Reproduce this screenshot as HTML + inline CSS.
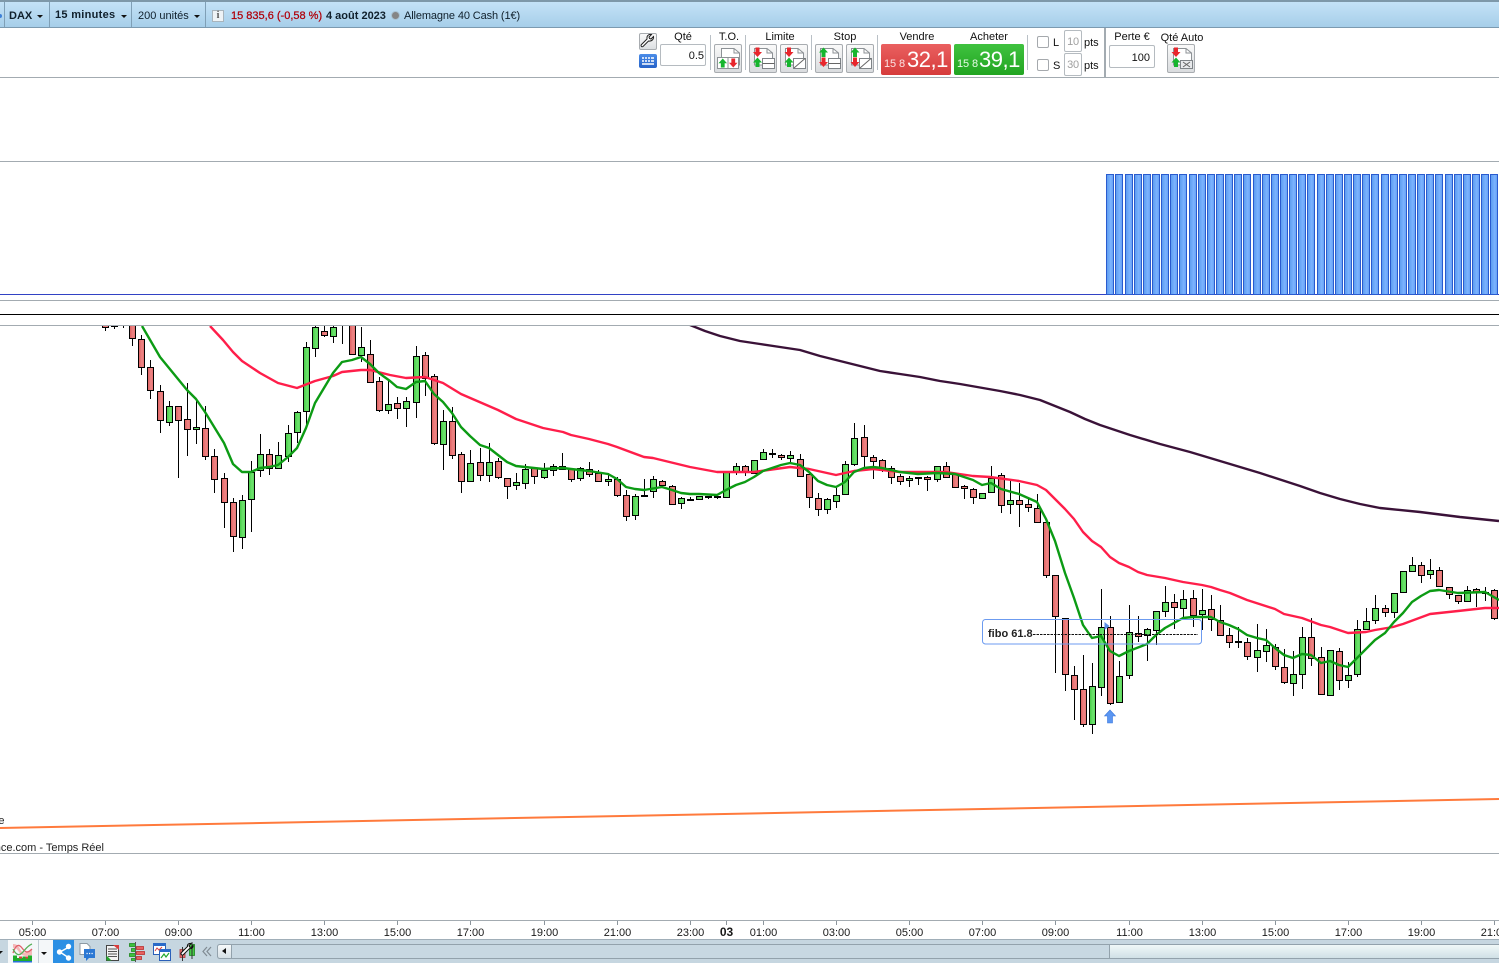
<!DOCTYPE html>
<html lang="fr">
<head>
<meta charset="utf-8">
<title>DAX 15 minutes</title>
<style>
html,body{margin:0;padding:0;background:#fff;}
body{width:1499px;height:963px;overflow:hidden;position:relative;font-family:"Liberation Sans",sans-serif;font-size:11px;color:#111;}
.a{position:absolute;white-space:nowrap;}
.t{position:absolute;white-space:nowrap;line-height:13px;}
.c{transform:translateX(-50%);}
#top{position:absolute;left:0;top:0;width:1499px;height:27px;background:linear-gradient(#c4e2f7,#a6cee9);border-top:2px solid #7e98a9;box-sizing:border-box;border-bottom:0;}
.sep{position:absolute;top:2px;height:25px;width:1px;background:#7f9fb6;}
.hl{position:absolute;left:0;width:1499px;height:1px;}
.vs{position:absolute;width:1px;top:35px;height:35px;background:#b9c0c6;}
.btn{position:absolute;top:44px;width:26px;height:27px;border:1px solid #a8acb0;border-radius:2px;background:linear-gradient(#fafafa,#d9dcdf);}
.btn svg{position:absolute;left:0;top:0;}
.inp{position:absolute;border:1px solid #b5bbc0;border-radius:2px;background:#fff;text-align:right;box-sizing:border-box;padding-right:1px;}
.cb{position:absolute;width:10px;height:10px;border:1px solid #a5a9ad;border-radius:2px;background:#fff;}
.caret{position:absolute;width:0;height:0;border-left:3.5px solid transparent;border-right:3.5px solid transparent;border-top:3.5px solid #111;}
.px{position:absolute;top:44px;width:70px;height:31px;border-radius:2px;color:#fff;}
</style>
</head>
<body>

<svg width="0" height="0" style="position:absolute">
<defs>
<linearGradient id="gg" x1="0" x2="1" y1="0" y2="0"><stop offset="0" stop-color="#42c942"/><stop offset=".6" stop-color="#6fe36f"/><stop offset="1" stop-color="#55d555"/></linearGradient>
<linearGradient id="gr" x1="0" x2="1" y1="0" y2="0"><stop offset="0" stop-color="#dc5f5f"/><stop offset=".6" stop-color="#ee8585"/><stop offset="1" stop-color="#e06c6c"/></linearGradient>
<linearGradient id="gb" x1="0" x2="1" y1="0" y2="0"><stop offset="0" stop-color="#5a9bee"/><stop offset=".6" stop-color="#7cb3ff"/><stop offset="1" stop-color="#639ff2"/></linearGradient>
<symbol id="dn" viewBox="0 0 10 10" overflow="visible"><path d="M3 0h4v4.500h2.500L5 9.500.5 4.500H3z" fill="#e8262c"/></symbol>
<symbol id="up" viewBox="0 0 10 10" overflow="visible"><path d="M5 0l4.500 5H7v4.500H3V5H.5z" fill="#16b52e"/></symbol>
<symbol id="doc" viewBox="0 0 20 14" overflow="visible"><path d="M.5.500H13L18.500 5v12H.5z" fill="#fff" stroke="#8d9296"/><path d="M13 .5V5h5.500" fill="none" stroke="#8d9296"/></symbol>
</defs>
</svg>

<!-- top bar -->
<div id="top"></div>
<div class="hl" style="top:27px;background:#7c9ab0"></div>
<div class="a" style="left:-2px;top:14px;width:4px;height:4px;border-radius:3px;background:#3d80d8"></div>
<div class="sep" style="left:4px"></div>
<div class="sep" style="left:49px"></div>
<div class="sep" style="left:131px"></div>
<div class="sep" style="left:205px"></div>
<div class="t" style="left:9px;top:10px;font-weight:bold;color:#10202c">DAX</div>
<div class="caret" style="left:37px;top:15px"></div>
<div class="t" style="left:55px;top:9px;font-weight:bold;color:#10202c;letter-spacing:.3px">15 minutes</div>
<div class="caret" style="left:121px;top:15px"></div>
<div class="t" style="left:138px;top:10px;color:#10202c">200 unités</div>
<div class="caret" style="left:194px;top:15px"></div>
<div class="a" style="left:212px;top:10px;width:12px;height:12px;background:#eef3f6;border:1px solid #a8b4bc;box-sizing:border-box;text-align:center;font:bold 10px/10px 'Liberation Serif',serif;color:#555">i</div>
<div class="t" style="left:231px;top:10px;color:#b0000a;-webkit-text-stroke:.25px #b0000a">15 835,6 (-0,58 %)</div>
<div class="t" style="left:326px;top:10px;font-weight:bold;color:#10202c">4 août 2023</div>
<div class="a" style="left:391px;top:11px;width:9px;height:9px;border-radius:50%;background:#858585;border:1px solid #a9c2d2;box-sizing:border-box"></div>
<div class="t" style="left:404px;top:10px;color:#10202c;letter-spacing:-.12px">Allemagne 40 Cash (1€)</div>

<!-- toolbar -->
<div class="hl" style="top:77px;background:#a3abb1"></div>
<div class="a" style="left:639px;top:33px;width:18px;height:17px;border:1px solid #a8acb0;border-radius:2px;box-sizing:border-box;background:linear-gradient(#fafafa,#dcdfe2)">
<svg width="16" height="15" style="position:absolute;left:0;top:0"><path d="M13.500 2.500l-2.500 2.500-1.500-.5-.5-1.500 2.500-2.500c-2-.5-4 .5-4.500 2.500l0 2-5.500 5.500c-1 1 0 3 1.500 2l5.500-5.500c3 .5 5.500-1.500 5-4.500z" fill="#fff" stroke="#222" stroke-width="1"/></svg>
</div>
<div class="a" style="left:639px;top:54px;width:18px;height:14px;border-radius:2px;background:linear-gradient(#4b8ce8,#2662c8)">
<svg width="18" height="14" style="position:absolute;left:0;top:0"><path d="M3 4h2M6 4h2M9 4h2M12 4h3M3 7h2M6 7h2M9 7h2M12 7h3M3 10h12" stroke="#fff" stroke-width="1.500" fill="none"/></svg>
</div>
<div class="t c" style="left:683px;top:31px">Qté</div>
<div class="inp" style="left:660px;top:44px;width:46px;height:22px;line-height:23px">0.5</div>
<div class="vs" style="left:710px"></div>
<div class="t c" style="left:729px;top:31px">T.O.</div>
<div class="btn" style="left:714px"><svg width="26" height="27"><use href="#doc" x="6" y="3" width="20" height="14"/><rect x="2.500" y="12.500" width="21" height="11" fill="#fff" stroke="#8d9296"/><path d="M13 13v10" stroke="#8d9296"/><use href="#up" x="3" y="13.500" width="9.500" height="9.500"/><use href="#dn" x="13.500" y="13.500" width="9.500" height="9.500"/></svg></div>
<div class="vs" style="left:745px"></div>
<div class="t c" style="left:780px;top:31px">Limite</div>
<div class="btn" style="left:749px"><svg width="26" height="27"><use href="#doc" x="4" y="3" width="20" height="14"/><use href="#dn" x="2.500" y="2.500" width="10" height="10"/><use href="#up" x="2.500" y="12.500" width="10" height="10"/><rect x="12.500" y="13.500" width="12" height="10" fill="#fff" stroke="#7f8488"/><path d="M12.500 18.500h12" stroke="#666"/></svg></div>
<div class="btn" style="left:780px"><svg width="26" height="27"><use href="#doc" x="4" y="3" width="20" height="14"/><use href="#dn" x="3" y="2.500" width="10" height="10"/><use href="#up" x="3" y="12.500" width="10" height="10"/><rect x="12.500" y="13.500" width="12" height="10" fill="#fff" stroke="#7f8488"/><path d="M13 23l11-9.500" stroke="#666"/></svg></div>
<div class="vs" style="left:811px"></div>
<div class="t c" style="left:845px;top:31px">Stop</div>
<div class="btn" style="left:815px"><svg width="26" height="27"><use href="#doc" x="4" y="3" width="20" height="14"/><use href="#up" x="2.500" y="2.500" width="10" height="10"/><use href="#dn" x="2.500" y="12.500" width="10" height="10"/><rect x="12.500" y="13.500" width="12" height="10" fill="#fff" stroke="#7f8488"/><path d="M12.500 18.500h12" stroke="#666"/></svg></div>
<div class="btn" style="left:846px"><svg width="26" height="27"><use href="#doc" x="4" y="3" width="20" height="14"/><use href="#up" x="3" y="2.500" width="10" height="10"/><use href="#dn" x="3" y="12.500" width="10" height="10"/><rect x="12.500" y="13.500" width="12" height="10" fill="#fff" stroke="#7f8488"/><path d="M13 23l11-9.500" stroke="#666"/></svg></div>
<div class="vs" style="left:877px"></div>
<div class="t c" style="left:917px;top:31px">Vendre</div>
<div class="px" style="left:881px;background:linear-gradient(#ea6060,#d63c3c)"><span class="t" style="left:3px;top:14px;color:#fbe3e3;letter-spacing:-.1px">15 8</span><span class="t" style="left:26px;top:3px;font-size:22px;line-height:26px;letter-spacing:-.5px">32,1</span></div>
<div class="t c" style="left:989px;top:31px">Acheter</div>
<div class="px" style="left:954px;background:linear-gradient(#3fc23f,#22a522)"><span class="t" style="left:3px;top:14px;color:#e8fbe8;letter-spacing:-.1px">15 8</span><span class="t" style="left:25px;top:3px;font-size:22px;line-height:26px;letter-spacing:-.5px">39,1</span></div>
<div class="vs" style="left:1027px"></div>
<div class="cb" style="left:1037px;top:36px"></div>
<div class="t" style="left:1053px;top:37px">L</div>
<div class="inp" style="left:1064px;top:30px;width:18px;height:22px;line-height:22px;text-align:center;color:#a0a0a0;padding:0;font-size:11px;letter-spacing:-.3px">10</div>
<div class="t" style="left:1084px;top:37px">pts</div>
<div class="cb" style="left:1037px;top:59px"></div>
<div class="t" style="left:1053px;top:60px">S</div>
<div class="inp" style="left:1064px;top:53px;width:18px;height:23px;line-height:23px;text-align:center;color:#a0a0a0;padding:0;font-size:11px;letter-spacing:-.3px">30</div>
<div class="t" style="left:1084px;top:60px">pts</div>
<div class="a" style="left:1104px;top:28px;width:2px;height:49px;background:#a3abb1"></div>
<div class="t c" style="left:1132px;top:31px">Perte €</div>
<div class="inp" style="left:1109px;top:45px;width:46px;height:23px;line-height:24px;padding-right:4px">100</div>
<div class="t c" style="left:1182px;top:32px">Qté Auto</div>
<div class="btn" style="left:1167px"><svg width="26" height="27"><use href="#doc" x="5" y="3" width="20" height="14"/><use href="#dn" x="3" y="2.500" width="10" height="10"/><use href="#up" x="3" y="12.500" width="10" height="10"/><rect x="12.500" y="15.500" width="12" height="8" fill="#e8eaec" stroke="#7f8488"/><path d="M15 17l7 5M22 17l-7 5" stroke="#666"/></svg></div>

<!-- panel lines -->
<div class="hl" style="top:161px;background:#a3abb1"></div>
<div class="hl" style="top:300px;background:#a3abb1"></div>
<div class="hl" style="top:314px;background:#000"></div>
<div class="hl" style="top:325px;background:#a3abb1"></div>
<div class="hl" style="top:853px;background:#a3abb1"></div>
<div class="hl" style="top:920px;background:#a3abb1"></div>

<!-- histogram + chart -->
<svg id="hist" class="a" style="left:0;top:160px" width="1499" height="140" viewBox="0 160 1499 140">
<path d="M0 294.500H1499" stroke="#3242c4" stroke-width="1"/>
</svg>

<svg id="chart" class="a" style="left:0;top:326px" width="1499" height="527" viewBox="0 326 1499 527">
<g id="candles"></g>
<polyline fill="none" stroke="#3a1238" stroke-width="2.400" stroke-linejoin="round" points="690,325 705,331 720,336 740,341 760,344 780,347 800,350 820,356 840,361 860,366 880,371 900,374 920,377 940,381 960,384 1000,391 1020,395 1040,400 1055,406 1070,412 1085,419 1100,425 1115,430 1130,435 1160,444 1190,452 1220,461 1260,473 1300,486 1320,493 1340,499 1360,504 1380,508 1420,512 1460,517 1499,521"/>
<polyline fill="none" stroke="#ff1e4a" stroke-width="2.400" stroke-linejoin="round" points="210,326 223,340 233,352 242,361 260,373 278,383 297,388 315,381 333,376 342,372 361,370 370,370 390,375 406,378 425,377 443,383 461,394 498,410 516,419 543,428 563,432 571,435 589,439 608,444 617,447 644,457 653,458 690,467 717,472 736,472 754,472 790,467 809,469 836,475 854,471 873,469 900,472 946,472 973,476 990,477 1019,481 1037,485 1046,490 1055,499 1065,509 1074,519 1083,532 1092,541 1101,547 1110,557 1119,563 1129,567 1138,572 1147,575 1165,578 1183,582 1202,585 1211,587 1220,590 1230,593 1247,600 1275,609 1284,614 1302,618 1321,625 1330,627 1348,633 1366,632 1375,630 1393,627 1403,624 1430,614 1458,611 1485,608 1499,608"/>
<polyline fill="none" stroke="#0c9b14" stroke-width="2.400" stroke-linejoin="round" points="142,326 160,357 187,390 196,399 205,412 224,443 233,464 242,472 251,472 260,468 269,467 278,465 288,457 297,448 306,428 315,403 324,388 333,373 342,362 352,360 361,357 370,364 379,373 390,381 397,387 406,389 416,382 425,381 434,394 443,402 452,413 461,427 470,436 480,445 489,448 498,455 507,462 516,466 525,467 543,469 563,468 571,469 589,471 608,474 617,479 626,487 635,489 644,490 662,487 672,490 681,493 690,494 699,494 717,495 726,490 736,485 745,482 754,477 763,471 772,468 781,465 790,463 800,465 809,472 818,481 827,485 836,487 845,482 854,472 864,468 873,467 882,468 900,472 918,474 937,473 955,474 973,480 982,485 991,483 1001,489 1019,494 1037,502 1046,519 1055,541 1065,573 1074,598 1083,625 1092,638 1101,636 1110,651 1119,656 1129,651 1147,644 1156,635 1165,628 1183,618 1193,617 1211,617 1220,622 1229,625 1238,629 1247,635 1257,638 1266,640 1275,648 1284,655 1293,658 1302,654 1311,655 1321,663 1330,661 1339,665 1348,667 1357,658 1366,649 1375,640 1385,633 1394,622 1403,613 1412,602 1421,596 1430,591 1439,590 1458,593 1485,592 1499,600"/>
<polyline fill="none" stroke="#ff7a3c" stroke-width="2" points="0,828 1499,799"/>
<rect x="982.500" y="619.500" width="219" height="24.500" rx="3" fill="none" stroke="#6c9bf0" stroke-width="1"/>
<path d="M1033 634.500H1198" stroke="#111" stroke-width="1" stroke-dasharray="2.500 1"/>
<text x="988" y="637" font-family="Liberation Sans" font-size="11" font-weight="bold" fill="#222">fibo 61.8</text>
<path d="M1104.500 622l5 4-5 4z" fill="#5b8fe8"/>
<path d="M1110 710l5.500 6h-3v7h-5v-7h-3z" fill="#5b96f2" stroke="#3b78dc" stroke-width=".6"/>
<text x="4.500" y="824" text-anchor="end" font-family="Liberation Sans" font-size="11" fill="#222">Volume</text>
<text x="104" y="851" text-anchor="end" font-family="Liberation Sans" font-size="11" fill="#222">ance.com - Temps Réel</text>
</svg>

<!-- x axis -->
<svg class="a" style="left:0;top:920px" width="1499" height="19" viewBox="0 920 1499 19">
<path d="M32.500 921v4M105.500 921v4M178.500 921v4M251.500 921v4M324.500 921v4M397.500 921v4M470.500 921v4M544.500 921v4M617.500 921v4M690.500 921v4M726.500 921v4M763.500 921v4M836.500 921v4M909.500 921v4M982.500 921v4M1055.500 921v4M1129.500 921v4M1202.500 921v4M1275.500 921v4M1348.500 921v4M1421.500 921v4M1494.500 921v4" stroke="#8c959c"/>
<g font-family="Liberation Sans" font-size="11" fill="#1a1a1a" text-anchor="middle">
<text x="32.500" y="936">05:00</text><text x="105.500" y="936">07:00</text><text x="178.500" y="936">09:00</text><text x="251.500" y="936">11:00</text><text x="324.500" y="936">13:00</text><text x="397.500" y="936">15:00</text><text x="470.500" y="936">17:00</text><text x="544.500" y="936">19:00</text><text x="617.500" y="936">21:00</text><text x="690.500" y="936">23:00</text><text x="726.500" y="936" font-weight="bold" font-size="12">03</text><text x="763.500" y="936">01:00</text><text x="836.500" y="936">03:00</text><text x="909.500" y="936">05:00</text><text x="982.500" y="936">07:00</text><text x="1055.500" y="936">09:00</text><text x="1129.500" y="936">11:00</text><text x="1202.500" y="936">13:00</text><text x="1275.500" y="936">15:00</text><text x="1348.500" y="936">17:00</text><text x="1421.500" y="936">19:00</text><text x="1494.500" y="936">21:00</text>
</g>
</svg>

<!-- bottom bar -->
<div class="a" style="left:0;top:939px;width:1499px;height:24px;background:#c6d6e0;border-top:1px solid #a0aeb8;box-sizing:border-box"></div>
<div class="caret" style="left:-3px;top:951px"></div>
<div class="a" style="left:8px;top:940px;width:30px;height:23px;background:#f4f7f9"></div>
<div class="a" style="left:38px;top:940px;width:15px;height:23px;background:#f4f7f9;border-left:1px solid #c0ccd4;box-sizing:border-box"></div>
<div class="caret" style="left:41px;top:952px"></div>
<div class="a" style="left:53px;top:940px;width:21px;height:23px;background:#2b8fe4"></div>
<svg class="a" style="left:0;top:939px" width="232" height="24" viewBox="0 939 232 24">
<!-- chart selector -->
<path d="M13 944c3 0 5 1 7 5s5 5 12 1v5c-7 2-10 1-13-3s-4-5-6-4z" fill="#f4b8b8"/>
<path d="M13 953c3-9 6-9 9-5s5 6 10 1" fill="none" stroke="#e0606a" stroke-width="1.300"/>
<path d="M13 949c3 6 6 7 9 4s5-7 10-9" fill="none" stroke="#58b058" stroke-width="1.300"/>
<path d="M13 958h19v3H13zM13 955.500h4v3h-4zM28 955.500h4v3h-4zM22.500 956.500h3v2h-3z" fill="#1fae2a"/>
<path d="M19 956.500h3v2h-3zM25.500 956.500h2.500v2h-2.500z" fill="#d94040"/>
<path d="M13 961h19v1.500H13z" fill="#2a70d8"/>
<!-- share -->
<path d="M60 952l9-5M60 952l9 6" stroke="#fff" stroke-width="1.400"/>
<circle cx="59.500" cy="952" r="2.700" fill="#fff"/><circle cx="68.500" cy="946.500" r="2.700" fill="#fff"/><circle cx="68.500" cy="958" r="2.700" fill="#fff"/>
<!-- doc + chat -->
<path d="M80 943.500h7l3 3v8h-10z" fill="#fff" stroke="#8d9aa4"/>
<path d="M84 949h11v9h-6l-3 3v-3h-2z" fill="#2b78d4"/>
<path d="M86.500 953.500h1.200M89 953.500h1.200M91.500 953.500h1.200" stroke="#fff" stroke-width="1.200"/>
<!-- order list -->
<path d="M106.500 945.500h12v15h-12z" fill="#f4f4f4" stroke="#444"/>
<path d="M108 949h9M108 951.500h9M108 954h9M108 956.500h9" stroke="#555"/>
<path d="M113 945h6v5z" fill="#d93b3b"/><path d="M106.500 960.500v-5l5 5z" fill="#24a82c"/>
<!-- depth bars -->
<path d="M129.500 943.500h6v3h-6zM131.500 948.500h4v3h-4zM129.500 953.500h6v3h-6zM131.500 958.500h4v2h-4z" fill="#3cc23c" stroke="#1c861c" stroke-width=".8"/>
<path d="M136.500 946.500h7v3h-7zM136.500 951.500h8v3h-8zM136.500 956.500h5v3h-5z" fill="#e76060" stroke="#b82c2c" stroke-width=".8"/>
<path d="M135.500 942v20" stroke="#555"/>
<!-- windows -->
<rect x="153.500" y="943.500" width="12" height="11" fill="#fff" stroke="#2a5fb8"/><path d="M153 943h13v3h-13z" fill="#2a6ac8"/>
<rect x="159.500" y="949.500" width="11" height="11" fill="#fff" stroke="#2a5fb8"/><path d="M159 949h12v3h-12z" fill="#2a6ac8"/>
<path d="M155 951l2-3 2 2 3-3" stroke="#d84040" fill="none"/><path d="M161 958l3-4 2 3 3-4" stroke="#24a82c" fill="none" stroke-width="1.200"/>
<!-- indicators -->
<path d="M180 949.500h5v8h-5z" fill="#e57070" stroke="#a33" stroke-width=".8"/><path d="M189.500 944.500h5v11h-5z" fill="#45c845" stroke="#1c861c" stroke-width=".8"/><path d="M192 942v17M182.500 947v14" stroke="#333"/>
<path d="M193 945.500l-2 2-1.500-.5-.5-1.500 2-2c-2-.5-4 1-3.500 3l-6 6c-1.500 1.500.5 3.500 2 2l6-6c2 .5 4-1 3.500-3z" fill="#fff" stroke="#111" stroke-width="1"/>
<!-- << -->
<path d="M207 947l-4 4.500 4 4.500M211 947l-4 4.500 4 4.500" fill="none" stroke="#7f8a92" stroke-width="1.200"/>
</svg>
<div class="a" style="left:217px;top:944px;width:1282px;height:15px;background:#c8d8e2;border:1px solid #93a2ac;border-right:0;box-sizing:border-box;border-radius:3px 0 0 3px"></div>
<div class="a" style="left:217px;top:944px;width:15px;height:15px;background:linear-gradient(#f6f9fa,#d5e0e6);border:1px solid #93a2ac;box-sizing:border-box;border-radius:3px 0 0 3px"></div>
<div class="a" style="left:222px;top:948px;width:0;height:0;border-top:3.500px solid transparent;border-bottom:3.500px solid transparent;border-right:4px solid #111"></div>
<div class="a" style="left:1109px;top:944px;width:390px;height:15px;background:linear-gradient(#f0f8f8,#d0e0e6);border:1px solid #93a2ac;border-right:0;box-sizing:border-box"></div>

<script>
var D=[
[320,323,327,331,'r'],[320,324,326,329,'g'],[320,322,324,328,'r'],[320,320,338,346,'r'],[335,339,367,375,'r'],[360,367,390,399,'r'],[385,391,420,433,'r'],[401,406,422,426,'g'],[406,406,420,478,'r'],[383,419,429,456,'r'],[400,427,429,444,'g'],[406,428,456,460,'r'],[449,456,479,493,'r'],[473,478,502,528,'r'],[498,502,536,552,'r'],[495,500,537,549,'g'],[461,472,499,532,'g'],[434,454,470,477,'g'],[449,454,468,475,'r'],[442,455,468,468,'g'],[425,433,456,462,'g'],[411,412,432,443,'g'],[342,347,411,426,'g'],[320,327,348,357,'g'],[322,331,335,337,'r'],[322,327,336,343,'g'],[322,324,326,344,'d'],[320,320,354,354,'r'],[327,347,355,362,'g'],[340,354,382,382,'r'],[377,381,410,412,'r'],[381,404,410,414,'g'],
[397,403,408,419,'r'],[397,401,408,427,'g'],[346,356,402,418,'g'],[352,355,378,396,'r'],[374,376,443,445,'r'],[410,421,444,470,'g'],[407,421,455,459,'r'],[452,454,481,493,'r'],[450,463,481,481,'g'],[448,462,475,481,'r'],[443,462,475,482,'g'],[458,461,477,479,'r'],[478,478,486,499,'r'],[473,482,485,490,'g'],[464,469,483,489,'g'],[467,468,476,484,'r'],[463,470,477,479,'g'],[464,466,470,476,'g'],[453,466,469,470,'r'],[468,469,479,482,'r'],[467,468,478,481,'g'],[462,469,474,477,'r'],[470,473,481,482,'r'],[473,479,481,486,'g'],[477,479,495,497,'r'],[490,495,516,521,'r'],[494,496,515,520,'g'],[479,495,495,496,'d'],[476,479,491,498,'g'],[480,481,485,486,'r'],[485,486,504,504,'r'],[497,498,503,509,'g'],
[497,499,499,501,'d'],[496,496,499,500,'g'],[496,496,496,499,'d'],[496,496,496,499,'d'],[472,472,497,498,'g'],[463,466,472,475,'g'],[465,466,472,476,'r'],[460,460,473,474,'g'],[449,452,459,459,'g'],[449,453,453,458,'d'],[454,455,457,460,'r'],[451,455,458,463,'g'],[454,459,476,476,'r'],[474,474,497,508,'r'],[493,498,509,516,'r'],[498,499,509,514,'g'],[488,495,501,508,'g'],[461,464,494,495,'g'],[423,438,464,466,'g'],[425,437,456,467,'r'],[455,457,461,479,'r'],[459,460,470,472,'r'],[466,468,477,484,'r'],[474,476,481,485,'r'],[476,478,480,487,'g'],[477,477,477,485,'d'],[476,477,479,491,'r'],[466,466,479,482,'g'],[462,466,477,478,'r'],[473,474,487,487,'r'],[485,486,488,499,'r'],[488,489,497,504,'r'],[493,493,498,498,'g'],
[466,478,492,493,'g'],[473,475,505,513,'r'],[479,500,504,514,'g'],[483,500,504,527,'r'],[498,504,507,512,'r'],[494,508,522,522,'r'],[522,522,575,578,'r'],[575,575,616,673,'r'],[618,618,674,691,'r'],[666,675,689,720,'r'],[655,689,724,727,'r'],[663,686,724,734,'g'],[589,627,687,696,'g'],[616,627,703,705,'r'],[661,676,702,703,'g'],[605,632,675,679,'g'],[616,633,636,642,'r'],[628,629,635,661,'g'],[611,611,630,645,'g'],[586,602,611,617,'g'],[594,602,607,629,'r'],[590,599,608,618,'g'],[590,598,615,627,'r'],[589,610,614,630,'g'],[595,609,619,631,'r'],[605,620,635,635,'r'],[628,635,642,648,'r'],[627,641,641,648,'d'],
[638,642,656,660,'r'],[624,650,657,672,'g'],[629,645,651,662,'g'],[644,647,666,670,'r'],[649,667,682,684,'r'],[651,674,683,696,'g'],[627,637,674,689,'g'],[618,637,658,666,'r'],[647,657,694,695,'r'],[650,650,695,696,'g'],[648,651,680,690,'r'],[662,675,680,688,'g'],[620,629,674,677,'g'],[608,621,629,629,'g'],[595,608,620,624,'g'],[605,608,612,617,'r'],[593,593,612,618,'g'],[571,571,592,593,'g'],[557,565,571,571,'g'],[562,565,575,583,'r'],[559,570,574,579,'g'],[567,570,586,587,'r'],[587,587,594,599,'r'],[595,595,601,604,'r'],[586,590,601,602,'g'],[588,589,592,607,'r'],[587,592,592,601,'d'],[589,590,618,620,'r']
];
function X(i){return Math.floor((i<90?105.2:105.01)+i*64/7);}
var NS='http://www.w3.org/2000/svg',g=document.getElementById('candles'),h=document.getElementById('hist');
function el(p,t,a){var e=document.createElementNS(NS,t);for(var k in a)e.setAttribute(k,a[k]);p.appendChild(e);return e;}
D.forEach(function(c,i){
  var x=X(i),cx=x+.5;
  el(g,'path',{d:'M'+cx+' '+c[0]+'V'+c[3],stroke:'#000','stroke-width':1});
  if(c[4]=='d'){el(g,'rect',{x:x-3,y:c[1],width:7,height:2,fill:'#000'});}
  else{el(g,'rect',{x:x-2.5,y:c[1]+.5,width:6,height:Math.max(c[2]-c[1],1),fill:c[4]=='g'?'url(#gg)':'url(#gr)',stroke:'#000','stroke-width':1});}
});
for(var i=110;i<=153;i++){var x=X(i);
  el(h,'rect',{x:x-3.5,y:174.5,width:7,height:120,fill:'url(#gb)',stroke:'#2a5bcf','stroke-width':1});
}
</script>
</body>
</html>
